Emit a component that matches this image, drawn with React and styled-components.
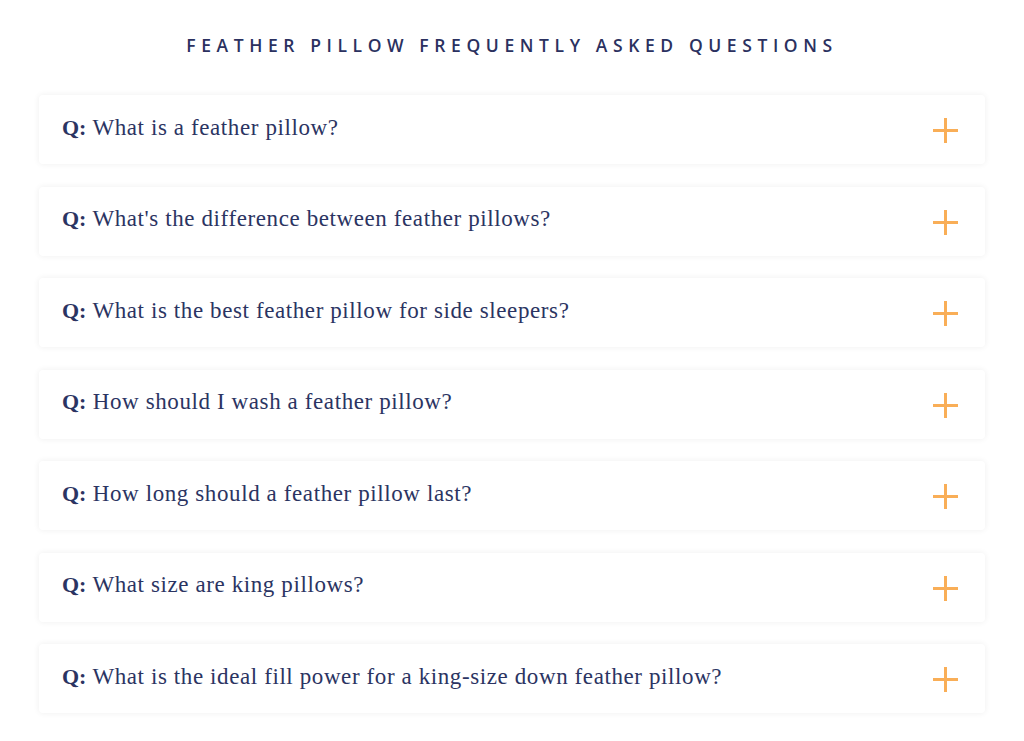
import React from "react";
import styled, { createGlobalStyle } from "styled-components";

const Global = createGlobalStyle`
  html, body { margin: 0; padding: 0; background: #ffffff; }
  body { font-family: "Liberation Serif", serif; }
`;

const Page = styled.div`
  width: 1024px;
  padding: 34px 39px 20px;
  box-sizing: border-box;
`;

const Title = styled.h2`
  margin: 0 0 39px;
  text-align: center;
  font-family: "Open Sans", Lato, sans-serif;
  font-weight: 600;
  font-size: 17.5px;
  letter-spacing: 5.6px;
  line-height: 22px;
  color: #2b3160;
  text-transform: uppercase;
`;

const List = styled.div`
  display: flex;
  flex-direction: column;
  gap: 22.5px;
`;

const Card = styled.div`
  height: 69px;
  display: flex;
  align-items: center;
  justify-content: space-between;
  padding: 0 27px 0 23px;
  background: #fff;
  border-radius: 4px;
  box-shadow: 0 0 6px rgba(0, 0, 0, 0.07);
`;

const Question = styled.div`
  font-family: "Liberation Serif", serif;
  font-size: 23px;
  letter-spacing: 0.6px;
  color: #2b3462;
  margin-top: -4px;
`;

const Q = styled.b`
  font-weight: 700;
  font-size: 22px;
  letter-spacing: 0;
`;

const Plus = styled.span`
  position: relative;
  width: 25px;
  height: 25px;
  flex: none;
  margin-top: 2px;
  &::before, &::after {
    content: "";
    position: absolute;
    background: #f9ae57;
  }
  &::before { left: 0; right: 0; top: 11px; height: 3px; }
  &::after { top: 0; bottom: 0; left: 11px; width: 3px; }
`;

const items = [
  "What is a feather pillow?",
  "What's the difference between feather pillows?",
  "What is the best feather pillow for side sleepers?",
  "How should I wash a feather pillow?",
  "How long should a feather pillow last?",
  "What size are king pillows?",
  "What is the ideal fill power for a king-size down feather pillow?",
];

export default function App() {
  return (
    <Page>
      <Global />
      <Title>Feather Pillow Frequently Asked Questions</Title>
      <List>
        {items.map((t) => (
          <Card key={t}>
            <Question>
              <Q>Q:</Q> {t}
            </Question>
            <Plus />
          </Card>
        ))}
      </List>
    </Page>
  );
}
